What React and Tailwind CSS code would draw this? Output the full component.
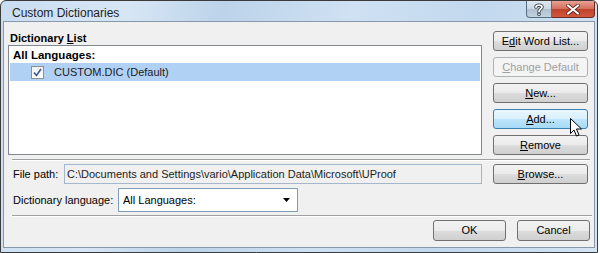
import React from 'react';

const font = { fontFamily: '"Liberation Sans", Arial, sans-serif' };

// Vista style push button
const Btn = ({ children, hot, disabled, className = '' }) => (
  <div
    className={`relative h-[20px] rounded-[3px] border flex items-center justify-center text-[11px] overflow-hidden ${
      hot
        ? 'border-[#3c7fb1] bg-[linear-gradient(#eaf6fd_0%,#d9f0fc_50%,#bee6fd_50%,#a7d9f5_100%)] text-black'
        : disabled
        ? 'border-[#adb2b5] bg-[#f4f4f4] text-[#a0a0a0]'
        : 'border-[#707070] bg-[linear-gradient(#f2f2f2_0%,#ebebeb_50%,#dddddd_50%,#cfcfcf_100%)] text-black'
    } ${className}`}
  >
    <span className="relative">{children}</span>
  </div>
);

const Sep = ({ className = '' }) => (
  <div className={`h-[2px] border-t border-[#a0a0a0] border-b border-b-white ${className}`} />
);

export default function App() {
  return (
    <div className="w-[600px] h-[253px] bg-white relative" style={font}>
      <div className="w-[598px] h-[253px] flex flex-col border border-[#3b3b3b] rounded-t-[6px] overflow-hidden bg-[linear-gradient(100deg,#c9ddf2_0%,#d7e6f5_20%,#bcd3ea_35%,#cfe1f3_55%,#c2d8ee_75%,#d4e4f4_100%)]">
        {/* title bar */}
        <div className="h-[20px] flex items-start shrink-0">
          <div className="pl-[11px] pt-[3px] text-[12px] text-[#1e1e1e]">Custom Dictionaries</div>
          <div className="ml-auto mr-[2px] flex">
            <div className="w-[26px] h-[17px] border border-[#5a6c80] border-t-0 rounded-bl-[4px] bg-[linear-gradient(#dfe8f1_0%,#cbd8e5_50%,#aebfd0_50%,#c3d2e1_100%)] flex items-center justify-center">
              <svg width="10" height="13" viewBox="0 0 10 13">
                <path d="M2 4 C2 1.5 8 1.5 8 4 C8 6 5 6 5 8.5" stroke="#2a3440" strokeWidth="3.4" fill="none" strokeLinecap="round" />
                <circle cx="5" cy="11.3" r="1.7" fill="#2a3440" />
                <path d="M2 4 C2 1.5 8 1.5 8 4 C8 6 5 6 5 8.5" stroke="#fff" strokeWidth="1.8" fill="none" strokeLinecap="round" />
                <circle cx="5" cy="11.3" r="0.9" fill="#fff" />
              </svg>
            </div>
            <div className="w-[43px] h-[17px] border border-[#6b2a22] border-t-0 border-l-0 rounded-br-[4px] bg-[linear-gradient(#e8a093_0%,#d46e5c_50%,#c0402c_50%,#d2573d_100%)] flex items-center justify-center">
              <svg width="14" height="11" viewBox="0 0 14 11">
                <path d="M2 1.5 L12 9.5 M12 1.5 L2 9.5" stroke="#5a2018" strokeWidth="3.6" strokeLinecap="round" />
                <path d="M2 1.5 L12 9.5 M12 1.5 L2 9.5" stroke="#fff" strokeWidth="2.2" strokeLinecap="round" />
              </svg>
            </div>
          </div>
        </div>

        {/* client area */}
        <div className="flex-1 mx-[2px] mb-[4px] border border-[#8798aa] bg-[#f0f0f0] flex flex-col px-[4px] pt-[9px] text-[11px] text-black">
          <div className="flex gap-[11px]">
            <div className="w-[474px] flex flex-col">
              <div className="h-[14px] pl-[2px] font-bold leading-[14px]">
                Dictionary <span className="underline">L</span>ist
              </div>
              <div className="h-[110px] border border-[#828790] bg-white px-[1px] pt-[2px]">
                <div className="pl-[3px] font-bold text-[11.5px] leading-[14px]">All Languages:</div>
                <div className="mt-[1px] h-[18px] bg-[#b1d1f4] flex items-center">
                  <div className="ml-[21px] w-[13px] h-[13px] border border-[#8f8f8f] bg-[linear-gradient(#f0f0f0,#fff)] flex items-center justify-center">
                    <svg width="9" height="9" viewBox="0 0 9 9">
                      <path d="M1 4.5 L3.5 7.5 L8 1" stroke="#3a5a9a" strokeWidth="1.6" fill="none" />
                    </svg>
                  </div>
                  <span className="ml-[10px] text-[#1c1c1c]">CUSTOM.DIC (Default)</span>
                </div>
              </div>
            </div>
            <div className="w-[95px] flex flex-col gap-[6px]">
              <Btn>E<span className="underline">d</span>it Word List...</Btn>
              <Btn disabled><span className="underline">C</span>hange Default</Btn>
              <Btn><span className="underline">N</span>ew...</Btn>
              <Btn hot><span className="underline">A</span>dd...</Btn>
              <Btn><span className="underline">R</span>emove</Btn>
            </div>
          </div>

          <Sep className="mt-[4px] ml-[4px] mr-[0px]" />

          <div className="mt-[3px] flex items-center h-[20px]">
            <div className="w-[56px] pl-[5px]">File path:</div>
            <div className="w-[418px] h-[20px] border border-[#a3b8cc] bg-[#f0f0f0] flex items-center pl-[2px] text-[#1c1c1c] whitespace-nowrap overflow-hidden">
              C:\Documents and Settings\vario\Application Data\Microsoft\UProof
            </div>
            <Btn className="ml-[11px] w-[95px]"><span className="underline">B</span>rowse...</Btn>
          </div>

          <div className="mt-[4px] flex items-center h-[24px]">
            <div className="w-[110px] pl-[5px]">Dictionary language:</div>
            <div className="w-[180px] h-[24px] border border-[#7f9db9] bg-white flex items-center pl-[4px] pr-[7px]">
              <span>All Languages:</span>
              <svg className="ml-auto" width="7" height="4" viewBox="0 0 7 4">
                <path d="M0 0 H7 L3.5 4 Z" fill="#000" />
              </svg>
            </div>
          </div>

          <Sep className="mt-[3px] ml-[4px] -mr-[2px]" />

          <div className="mt-[3px] flex justify-end gap-[11px]">
            <Btn className="w-[73px] h-[21px]">OK</Btn>
            <Btn className="w-[73px] h-[21px]">Cancel</Btn>
          </div>
        </div>
      </div>

      {/* mouse pointer */}
      <svg className="absolute left-[570px] top-[118px]" width="13" height="20" viewBox="0 0 13 20">
        <path d="M0.5 0.5 V15.5 L4 12 L6.5 18 L9 17 L6.5 11 H11.5 Z" fill="#fff" stroke="#000" strokeWidth="1" strokeLinejoin="round" />
      </svg>
    </div>
  );
}
